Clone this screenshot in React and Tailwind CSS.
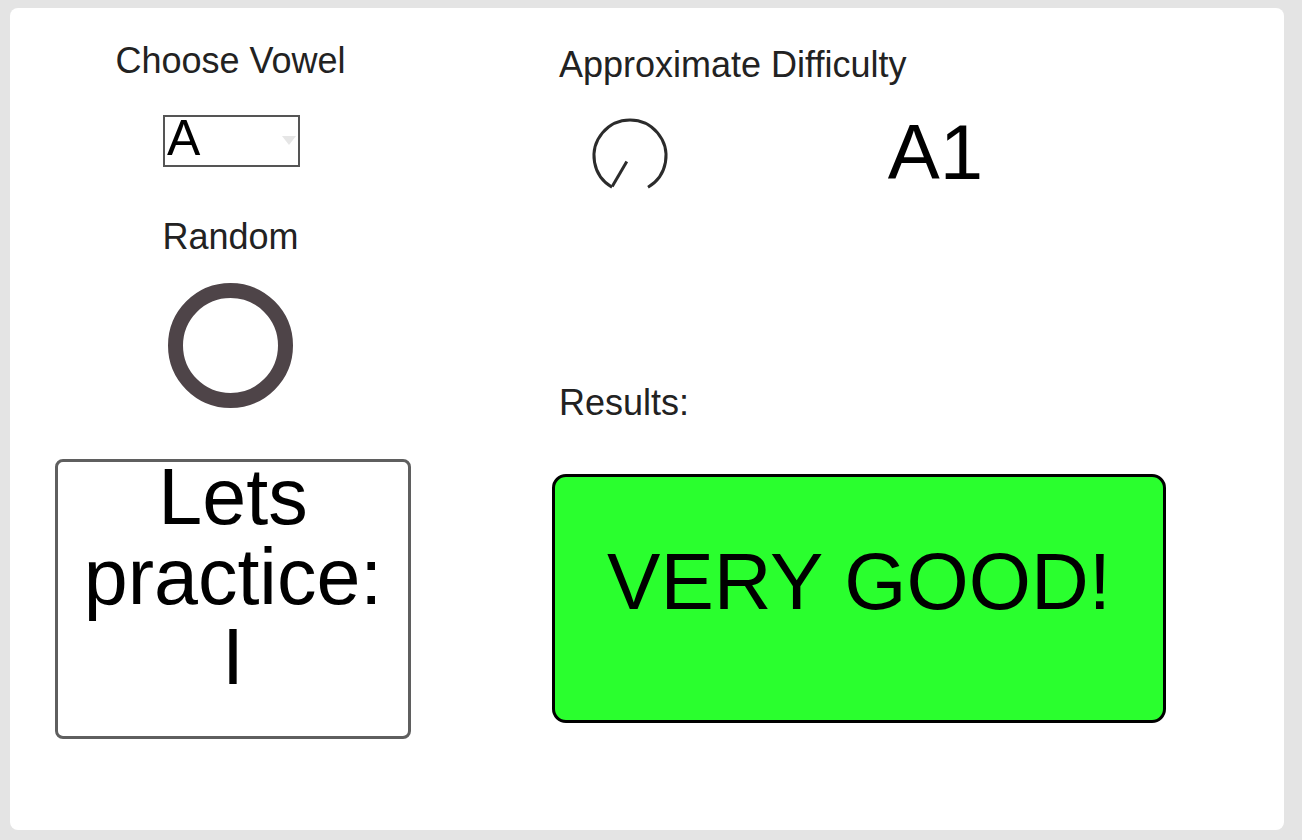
import React from "react";

function Knob() {
  return (
    <svg width="80" height="80" viewBox="0 0 80 80" className="block">
      <path
        d="M22 71.18 A36 36 0 1 1 58 71.18"
        fill="none"
        stroke="#2b2b2b"
        strokeWidth="3"
        strokeLinecap="butt"
      />
      <line x1="36.8" y1="45.6" x2="22.2" y2="70.4" stroke="#2b2b2b" strokeWidth="3" />
    </svg>
  );
}

export default function App() {
  return (
    <div className="w-[1302px] h-[840px] bg-[#e4e4e4] pt-[8px] pl-[10px] font-['Liberation_Sans',Arial,sans-serif]">
      <div className="w-[1274px] h-[822px] bg-white rounded-[8px] flex pl-[45px] pt-[33px]">
        {/* Left column */}
        <div className="w-[356px] flex flex-col">
          <div className="flex flex-col items-center pr-[5px]">
            <div className="text-[36px] leading-[40px] text-[#222]">Choose Vowel</div>
            <div className="mt-[34px] w-[137px] h-[52px] border-2 border-[#555] flex ml-[2px]">
              <div className="text-[50px] leading-[50px] text-black pl-[2px] -mt-[4px]">A</div>
              <svg width="14" height="9" viewBox="0 0 14 9" className="ml-auto mr-[2px] mt-[19px]">
                <polygon points="0,0 14,0 7,9" fill="#e6e6e6" />
              </svg>
            </div>
            <div className="mt-[50px] text-[36px] leading-[40px] text-[#222]">Random</div>
            <div className="mt-[26px] w-[125px] h-[125px] rounded-full border-[15px] border-[#4e4448]" />
          </div>
          <div className="mt-[51px] w-[356px] h-[280px] border-[3px] border-[#5f5f5f] rounded-[8px] text-center text-black text-[79px] leading-[80px]">
            <div className="-mt-[5px]">
              <div>Lets</div>
              <div>practice:</div>
              <div>I</div>
            </div>
          </div>
        </div>

        {/* Right column */}
        <div className="ml-[141px] w-[614px] flex flex-col">
          <div className="pl-[7px] mt-[4px] text-[36px] leading-[40px] text-[#222]">Approximate Difficulty</div>
          <div className="mt-[27px] flex items-start">
            <div className="ml-[37.5px] mt-[4px]">
              <Knob />
            </div>
            <div className="ml-[47.5px] w-[437px] h-[95px] rounded-[10px] text-center text-black text-[78px] leading-[80px]">
              A1
            </div>
          </div>
          <div className="mt-[176px] pl-[7px] text-[36px] leading-[40px] text-[#222]">Results:</div>
          <div className="mt-[51px] w-[614px] h-[249px] bg-[#2aff2e] border-[3px] border-black rounded-[14px] text-center text-black text-[80px] leading-[80px] pt-[65px]">
            VERY GOOD!
          </div>
        </div>
      </div>
    </div>
  );
}
